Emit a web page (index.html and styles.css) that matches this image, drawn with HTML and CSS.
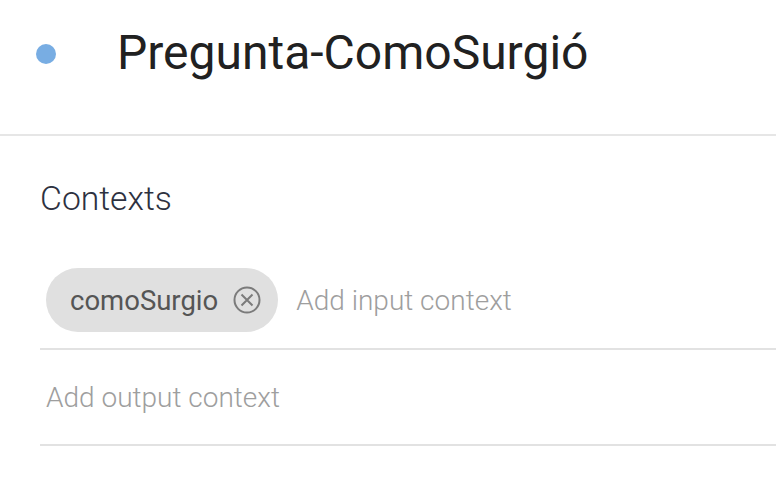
FILE: index.html
```html
<!DOCTYPE html>
<html>
<head>
<meta charset="utf-8">
<link rel="stylesheet" href="styles.css">
</head>
<body>
<header class="header">
  <span class="dot"></span>
  <h1 class="title">Pregunta-ComoSurgió</h1>
</header>
<section class="contexts">
  <h2 class="heading">Contexts</h2>
  <div class="row row-input">
    <span class="chip">
      <span class="chip-label">comoSurgio</span>
      <svg class="chip-close" width="28" height="28" viewBox="0 0 28 28">
        <circle cx="14" cy="14" r="12.5" fill="none" stroke="#7b7b7b" stroke-width="2"/>
        <path d="M8.5 8.5 L19.5 19.5 M19.5 8.5 L8.5 19.5" stroke="#7b7b7b" stroke-width="2" fill="none"/>
      </svg>
    </span>
    <span class="placeholder">Add input context</span>
  </div>
  <div class="row row-output">
    <span class="placeholder">Add output context</span>
  </div>
</section>
</body>
</html>
```

FILE: styles.css
```css
html, body {
  margin: 0;
  padding: 0;
  background: #ffffff;
  font-family: Roboto, "Noto Sans", sans-serif;
}

.header {
  display: flex;
  align-items: flex-start;
  padding-top: 29px;
  height: 105px;
  border-bottom: 2px solid #e6e6e6;
}

.dot {
  width: 20px;
  height: 20px;
  border-radius: 50%;
  background: #78ade3;
  margin-left: 36px;
  margin-top: 15px;
  flex: none;
}

.title {
  margin: 0 0 0 61px;
  font-size: 48px;
  line-height: 48px;
  font-weight: 400;
  color: #212121;
}

.contexts {
  padding-left: 40px;
}

.heading {
  margin: 46px 0 0 0;
  font-size: 33.7px;
  line-height: 33px;
  font-weight: 300;
  color: #2d3140;
}

.row {
  display: flex;
  align-items: center;
  padding-left: 6px;
  border-bottom: 2px solid #e2e2e2;
}

.row-input {
  height: 96px;
  margin-top: 37px;
}

.row-output {
  height: 94px;
}

.chip {
  display: flex;
  align-items: center;
  height: 64px;
  border-radius: 32px;
  background: #e0e0e0;
  padding: 0 17px 0 24px;
  margin-right: 18px;
}

.chip-label {
  font-size: 27.5px;
  color: #555555;
  margin-right: 15px;
}

.chip-close {
  display: block;
}

.placeholder {
  font-size: 28px;
  font-weight: 300;
  color: #9e9e9e;
}
```
